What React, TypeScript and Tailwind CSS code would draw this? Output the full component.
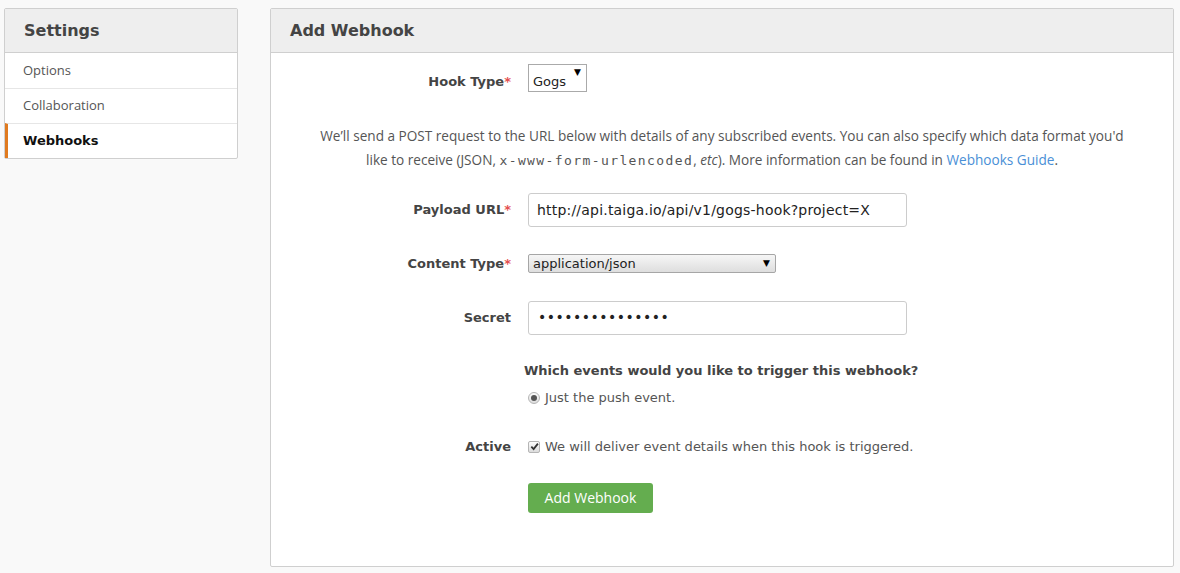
import React from "react";

const sideItems = [
  { label: "Options", active: false },
  { label: "Collaboration", active: false },
  { label: "Webhooks", active: true },
];

function Label({ text, required }: { text: string; required?: boolean }) {
  return (
    <div className="w-[241px] shrink-0 pr-[1px] text-right text-[13px] font-bold text-[#444] font-['DejaVu_Sans',sans-serif]">
      {text}
      {required && <span className="text-[#e4504f]">*</span>}
    </div>
  );
}

export default function App() {
  return (
    <div className="min-h-[573px] bg-[#f9f9f9] font-['Open_Sans',sans-serif]">
      <div className="flex items-start gap-[32px] pl-[4px] pt-[8px]">
        {/* sidebar */}
        <aside className="w-[234px] shrink-0 rounded-[2px] border border-[#cfcfcf] bg-white">
          <div className="flex h-[44px] items-center border-b border-[#cfcfcf] bg-[#eeeeee] px-[19px] text-[16px] font-bold text-[#444] font-['DejaVu_Sans',sans-serif]">
            Settings
          </div>
          <ul>
            {sideItems.map((item, i) => (
              <li
                key={item.label}
                className={[
                  "flex h-[35px] items-center text-[13px]",
                  i > 0 ? "border-t border-[#e6e6e6]" : "",
                  item.active
                    ? "border-l-[3px] border-l-[#e07a1f] pl-[15px] font-bold text-[#111] font-['DejaVu_Sans',sans-serif]"
                    : "pl-[18px] text-[#555] font-['Open_Sans',sans-serif]",
                ].join(" ")}
              >
                {item.label}
              </li>
            ))}
          </ul>
        </aside>

        {/* main panel */}
        <section className="h-[559px] w-[904px] shrink-0 rounded-[2px] border border-[#cfcfcf] bg-white">
          <div className="flex h-[44px] items-center border-b border-[#cfcfcf] bg-[#eeeeee] px-[19px] text-[16px] font-bold text-[#444] font-['DejaVu_Sans',sans-serif]">
            Add Webhook
          </div>

          <div className="text-[13px] text-[#555]">
            {/* hook type */}
            <div className="mt-[11px] flex items-end gap-[16px]">
              <div className="pb-[1px]">
                <Label text="Hook Type" required />
              </div>
              <div className="relative flex h-[28px] w-[59px] items-end border border-[#aaa] bg-white pl-[4px] text-[13px] text-[#222] font-['DejaVu_Sans',sans-serif]">
                Gogs
                <span className="absolute right-[5px] top-[1px] text-[9px] text-black">▼</span>
              </div>
            </div>

            {/* description */}
            <div className="mt-[32px] flex flex-col items-center text-[13.6px] leading-[24px] text-[#555] font-['Open_Sans',sans-serif]">
              <p className="whitespace-nowrap">
                We’ll send a POST request to the URL below with details of any subscribed events. You can also specify which data format you'd
              </p>
              <p className="whitespace-nowrap pr-[20px]">
                like to receive (JSON, <code className="font-['DejaVu_Sans_Mono',monospace] text-[13px] tracking-[1.4px]">x-www-form-urlencoded</code>, <em>etc</em>). More information can be found in{" "}
                <a className="text-[#4a8fd6]">Webhooks Guide</a>.
              </p>
            </div>

            {/* payload url */}
            <div className="mt-[20px] flex items-center gap-[16px]">
              <Label text="Payload URL" required />
              <div className="flex h-[34px] w-[379px] items-center rounded-[3px] border border-[#ccc] px-[8px] text-[14px] tracking-[0.2px] text-[#222] font-['DejaVu_Sans',sans-serif]">
                http://api.taiga.io/api/v1/gogs-hook?project=X
              </div>
            </div>

            {/* content type */}
            <div className="mt-[27px] flex items-center gap-[16px]">
              <Label text="Content Type" required />
              <div className="relative flex h-[19px] w-[248px] items-center rounded-[2px] border border-[#a6a6a6] bg-gradient-to-b from-[#f6f6f6] to-[#dedede] pl-[4px] text-[13px] text-[#222] font-['DejaVu_Sans',sans-serif]">
                application/json
                <span className="absolute right-[5px] top-[2px] text-[9px] text-black">▼</span>
              </div>
            </div>

            {/* secret */}
            <div className="mt-[27px] flex items-center gap-[16px]">
              <Label text="Secret" />
              <div className="flex h-[34px] w-[379px] items-center rounded-[3px] border border-[#ccc] px-[9px] text-[14px] tracking-[0.5px] text-[#222] font-['DejaVu_Sans',sans-serif]">
                •••••••••••••••
              </div>
            </div>

            {/* events */}
            <div className="mt-[26px] flex items-center gap-[12px]">
              <div className="w-[241px] shrink-0" />
              <div className="text-[13px] font-bold leading-[20px] text-[#444] font-['DejaVu_Sans',sans-serif]">
                Which events would you like to trigger this webhook?
              </div>
            </div>
            <div className="mt-[7px] flex items-center gap-[16px]">
              <div className="w-[241px] shrink-0" />
              <div className="flex items-center gap-[5px] leading-[20px] font-['DejaVu_Sans',sans-serif]">
                <span className="flex h-[12px] w-[12px] items-center justify-center rounded-full border border-[#b5b5b5] bg-gradient-to-b from-[#fdfdfd] to-[#dcdcdc]">
                  <span className="h-[6px] w-[6px] rounded-full bg-[#555]" />
                </span>
                <span>Just the push event.</span>
              </div>
            </div>

            {/* active */}
            <div className="mt-[29px] flex items-center gap-[16px]">
              <Label text="Active" />
              <div className="flex items-center gap-[5px] leading-[20px] font-['DejaVu_Sans',sans-serif]">
                <span className="flex h-[12px] w-[12px] items-center justify-center rounded-[2px] border border-[#b5b5b5] bg-gradient-to-b from-[#fdfdfd] to-[#dcdcdc]">
                  <svg width="9" height="9" viewBox="0 0 10 10">
                    <path d="M1.5 5.2 L4 7.8 L8.8 1.8" fill="none" stroke="#333" strokeWidth="2" />
                  </svg>
                </span>
                <span>We will deliver event details when this hook is triggered.</span>
              </div>
            </div>

            {/* button */}
            <div className="mt-[26px] flex gap-[16px]">
              <div className="w-[241px] shrink-0" />
              <button className="h-[30px] w-[125px] rounded-[3px] bg-[#64ad4f] text-[14px] text-white font-['Open_Sans',sans-serif]">
                Add Webhook
              </button>
            </div>
          </div>
        </section>
      </div>
    </div>
  );
}
